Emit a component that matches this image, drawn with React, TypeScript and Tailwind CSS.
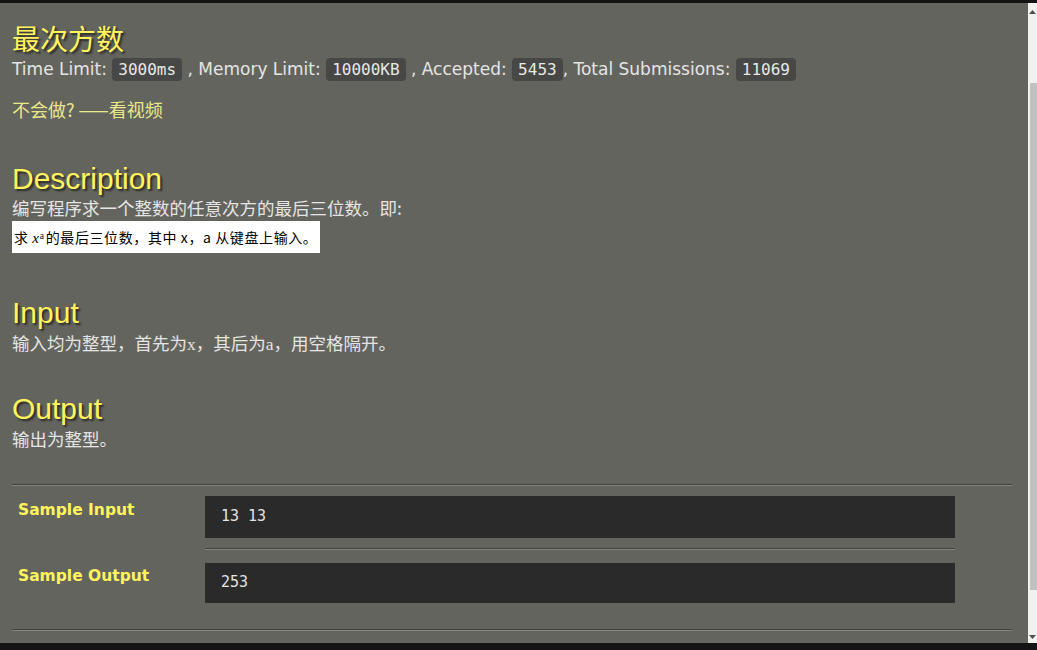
const Badge = ({ children }: { children: React.ReactNode }) => (
  <code className="rounded bg-[#474745] px-[6px] py-[2px] font-['DejaVu_Sans_Mono',monospace] text-[16px] text-[#e8e8e8]">
    {children}
  </code>
);

const Heading = ({ children }: { children: React.ReactNode }) => (
  <h2 className="h-[34px] font-['Liberation_Sans','Noto_Sans_CJK_SC',sans-serif] text-[30px] leading-[34px] text-[#fff45c] [text-shadow:2px_2px_2px_#2a2a26]">
    {children}
  </h2>
);

const Rule = ({ className = "" }: { className?: string }) => (
  <div className={`h-[2px] border-t border-b border-t-[#42423e] border-b-[#86867f] ${className}`} />
);

export default function App() {
  return (
    <div className="flex h-[650px] w-[1037px] flex-col overflow-hidden bg-[#141414]">
      <div className="h-[3px]" />
      <div className="flex min-h-0 flex-1">
        <div className="min-w-0 flex-1 bg-[#64645f] pl-[12px] pr-[16px] pt-[18px] font-['DejaVu_Sans','Noto_Sans_CJK_SC',sans-serif] text-[17px] text-[#e4e4e4]">
          <h1 className="h-[34px] font-['Noto_Sans_CJK_SC',sans-serif] text-[28px] leading-[34px] text-[#fff45c] [text-shadow:2px_2px_2px_#2a2a26]">
            最次方数
          </h1>
          <p className="h-[28px] leading-[28px]">
            Time Limit: <Badge>3000ms</Badge> , Memory Limit: <Badge>10000KB</Badge> , Accepted:{" "}
            <Badge>5453</Badge>, Total Submissions: <Badge>11069</Badge>
          </p>
          <p className="mt-[13px] h-[26px] font-['Noto_Sans_CJK_SC',sans-serif] text-[18px] leading-[26px] text-[#e8e88a]">
            不会做?&nbsp;——看视频
          </p>

          <div className="mt-[40px]">
            <Heading>Description</Heading>
            <p className="h-[24px] font-['Noto_Sans_CJK_SC',sans-serif] text-[17.5px] leading-[24px]">
              编写程序求一个整数的任意次方的最后三位数。即:
            </p>
            <div className="mt-[1px] h-[32px] w-[308px] overflow-hidden whitespace-nowrap bg-white pl-[2px] font-['Noto_Sans_CJK_SC',serif] text-[14px] leading-[32px] tracking-[0.6px] text-black">
              求 <i className="font-['Liberation_Serif',serif] text-[15px]">x</i>
              <sup className="mr-[1px] text-[8px]">a</sup>的最后三位数，其中 x，a 从键盘上输入。
            </div>
          </div>

          <div className="mt-[43px]">
            <Heading>Input</Heading>
            <p className="h-[26px] font-['Noto_Sans_CJK_SC',sans-serif] text-[17.5px] leading-[26px]">
              输入均为整型，首先为<span className="font-['Liberation_Serif',serif]">x</span>，其后为
              <span className="font-['Liberation_Serif',serif]">a</span>，用空格隔开。
            </p>
          </div>

          <div className="mt-[36px]">
            <Heading>Output</Heading>
            <p className="h-[26px] font-['Noto_Sans_CJK_SC',sans-serif] text-[17.5px] leading-[26px]">输出为整型。</p>
          </div>

          <div className="mt-[32px] w-[1000px]">
            <Rule />
            <div className="flex pt-[10px]">
              <div className="w-[193px] pl-[6px] pt-[4px] text-[15.5px] font-bold leading-[20px] text-[#fff45c]">
                Sample Input
              </div>
              <pre className="h-[42px] w-[750px] bg-[#2a2a2a] px-[16px] pt-[10px] font-['DejaVu_Sans_Mono',monospace] text-[15px] leading-[20px] text-[#e4e4e4]">
                13 13
              </pre>
            </div>
            <Rule className="ml-[193px] mt-[10px] w-[750px]" />
            <div className="flex pt-[13px]">
              <div className="w-[193px] pl-[6px] pt-[3px] text-[15.5px] font-bold leading-[20px] text-[#fff45c]">
                Sample Output
              </div>
              <pre className="h-[40px] w-[750px] bg-[#2a2a2a] px-[16px] pt-[9px] font-['DejaVu_Sans_Mono',monospace] text-[15px] leading-[20px] text-[#e4e4e4]">
                253
              </pre>
            </div>
            <Rule className="mt-[26px]" />
          </div>
        </div>
        <div className="flex w-[9px] flex-col bg-[#f1f1f1]">
          <div className="flex h-[17px] items-center justify-center">
            <svg width="7" height="4" viewBox="0 0 7 4">
              <path d="M0 4 L3.5 0 L7 4 Z" fill="#505050" />
            </svg>
          </div>
          <div className="ml-[2px] mt-[63px] h-[507px] bg-[#c1c1c1]" />
          <div className="flex flex-1 items-end justify-center pb-[4px]">
            <svg width="7" height="4" viewBox="0 0 7 4">
              <path d="M0 0 L3.5 4 L7 0 Z" fill="#505050" />
            </svg>
          </div>
        </div>
      </div>
      <div className="h-[7px]" />
    </div>
  );
}
